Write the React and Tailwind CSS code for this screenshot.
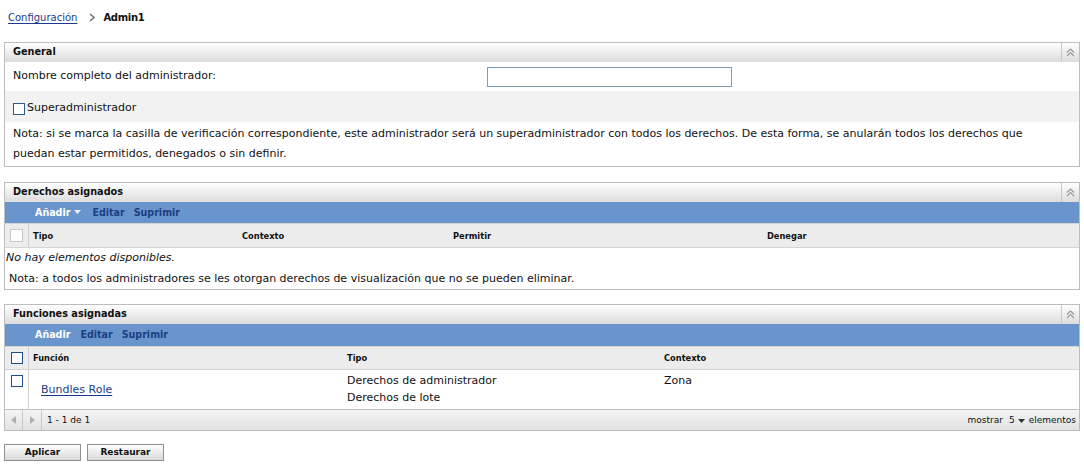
import React from "react";

const F = { fontFamily: '"DejaVu Sans", Verdana, sans-serif' };
const FC = { fontFamily: '"DejaVu Sans Condensed", "DejaVu Sans", sans-serif' };

function Collapse() {
  return (
    <div className="w-[18px] self-stretch border-l border-[#c8c8c8] flex items-center justify-center">
      <svg width="9" height="9" viewBox="0 0 9 9" fill="none" stroke="#9a9a9a" strokeWidth="1.2">
        <path d="M1 4.5 L4.5 1 L8 4.5" />
        <path d="M1 8 L4.5 4.5 L8 8" />
      </svg>
    </div>
  );
}

function PanelHeader({ title }) {
  return (
    <div className="h-[19px] flex items-stretch bg-gradient-to-b from-white to-[#dcdcdc]">
      <div className="flex-1 pl-[8px] flex items-center text-[10.8px] font-bold text-[#111]" style={FC}>{title}</div>
      <Collapse />
    </div>
  );
}

function Toolbar({ arrow, h }) {
  return (
    <div className={`${h} bg-[#6a95cc] flex items-center pl-[30px] text-[10.6px] font-bold`} style={FC}>
      <span className="text-white flex items-center gap-[4px]">
        Añadir
        {arrow && (
          <svg width="7" height="4" viewBox="0 0 7 4"><path d="M0 0 H7 L3.5 4Z" fill="#e8eef8" /></svg>
        )}
      </span>
      <span className={`text-[#1c3f86] ${arrow ? "ml-[11px]" : "ml-[10px]"}`}>Editar</span>
      <span className="text-[#1c3f86] ml-[9px]">Suprimir</span>
    </div>
  );
}

function Box() {
  return <div className="w-[12px] h-[12px] bg-white border border-[#1f4f8a]" />;
}

const btn =
  "w-[77px] h-[17px] border border-[#8e8e8e] bg-gradient-to-b from-white to-[#d8d8d8] font-bold text-[9px] flex items-center justify-center text-[#111]";

export default function App() {
  return (
    <div className="w-[1084px] h-[475px] bg-white text-[11px] text-[#111] px-[4px]" style={F}>
      <div className="h-[42px] pt-[10px] pl-[4px] flex items-start">
        <span className="text-[#1a3c8c] underline underline-offset-2 text-[10px]">Configuración</span>
        <svg width="6" height="9" viewBox="0 0 6 9" className="mt-[3px] ml-[12px]"><path d="M1 1 L5 4.5 L1 8" fill="none" stroke="#777" strokeWidth="1.6" /></svg>
        <span className="font-bold text-[10px] tracking-[-0.3px] ml-[8px]">Admin1</span>
      </div>

      {/* General */}
      <div className="border border-[#bdbdbd]">
        <PanelHeader title="General" />
        <div className="h-[29px] flex items-center pl-[8px]">
          <span className="w-[474px]">Nombre completo del administrador:</span>
          <div className="w-[245px] h-[20px] border border-[#7f9db9] bg-white" />
        </div>
        <div className="h-[31px] flex items-center pt-[4px] pl-[8px] bg-[#f2f2f2] gap-[2px]">
          <div className="w-[12px] h-[12px] border border-[#2a5a8a] bg-white" />
          <span>Superadministrador</span>
        </div>
        <div className="pl-[8px] pr-[40px] pt-[2px] pb-[2px] leading-[20px]">
          Nota: si se marca la casilla de verificación correspondiente, este administrador será un superadministrador con todos los derechos. De esta forma, se anularán todos los derechos que puedan estar permitidos, denegados o sin definir.
        </div>
      </div>

      {/* Derechos asignados */}
      <div className="border border-[#bdbdbd] mt-[15px]">
        <PanelHeader title="Derechos asignados" />
        <Toolbar arrow h="h-[21px]" />
        <div className="h-[25px] bg-[#ececec] border-t border-[#d4d4d4] border-b border-[#c0c0c0] flex items-stretch font-bold text-[9.2px]" style={FC}>
          <div className="w-[24px] border-r border-[#d0d0d0] flex items-center justify-center">
            <div className="w-[13px] h-[13px] bg-white border border-[#c8c8c8]" />
          </div>
          <div className="w-[213px] pl-[4px] flex items-center">Tipo</div>
          <div className="w-[211px] flex items-center">Contexto</div>
          <div className="w-[314px] flex items-center">Permitir</div>
          <div className="flex-1 flex items-center">Denegar</div>
        </div>
        <div className="h-[21px] flex items-center italic pl-[1px]">No hay elementos disponibles.</div>
        <div className="h-[20px] flex items-center pl-[4px]">Nota: a todos los administradores se les otorgan derechos de visualización que no se pueden eliminar.</div>
      </div>

      {/* Funciones asignadas */}
      <div className="border border-[#bdbdbd] mt-[14px]">
        <PanelHeader title="Funciones asignadas" />
        <Toolbar h="h-[22px]" />
        <div className="h-[24px] bg-[#ececec] border-t border-[#d4d4d4] border-b border-[#c0c0c0] flex items-stretch font-bold text-[9.2px]" style={FC}>
          <div className="w-[24px] border-r border-[#d0d0d0] flex items-center justify-center">
            <Box />
          </div>
          <div className="w-[318px] pl-[4px] flex items-center">Función</div>
          <div className="w-[317px] flex items-center">Tipo</div>
          <div className="flex-1 flex items-center">Contexto</div>
        </div>
        <div className="h-[39px] flex items-stretch">
          <div className="w-[24px] border-r border-[#d0d0d0] flex justify-center pt-[5px]">
            <Box />
          </div>
          <div className="w-[318px] pl-[12px] flex items-center pt-[1px]">
            <span className="text-[#1a3c8c] underline underline-offset-2">Bundles Role</span>
          </div>
          <div className="w-[317px] pt-[2px] leading-[17px]">
            <div>Derechos de administrador</div>
            <div>Derechos de lote</div>
          </div>
          <div className="flex-1 pt-[2px] leading-[17px]">Zona</div>
        </div>
        <div className="h-[21px] bg-gradient-to-b from-[#f4f4f4] to-[#e2e2e2] border-t border-[#c0c0c0] flex items-stretch text-[9px]">
          <div className="w-[18px] border-r border-[#c8c8c8] flex items-center justify-center">
            <svg width="5" height="8" viewBox="0 0 5 8"><path d="M5 0 V8 L0 4Z" fill="#b0b0b0" /></svg>
          </div>
          <div className="w-[19px] border-r border-[#c8c8c8] flex items-center justify-center">
            <svg width="5" height="8" viewBox="0 0 5 8"><path d="M0 0 V8 L5 4Z" fill="#b0b0b0" /></svg>
          </div>
          <div className="flex-1 pl-[5px] flex items-center pt-[2px]">1 - 1 de 1</div>
          <div className="flex items-center pr-[3px] gap-[4px] pt-[2px]">
            <span>mostrar</span>
            <span className="flex items-center gap-[3px] ml-[2px]">5
              <svg width="7" height="4" viewBox="0 0 7 4"><path d="M0 0 H7 L3.5 4Z" fill="#333" /></svg>
            </span>
            <span>elementos</span>
          </div>
        </div>
      </div>

      <div className="mt-[13px] flex gap-[6px]">
        <button className={btn} style={F}>Aplicar</button>
        <button className={btn} style={F}>Restaurar</button>
      </div>
    </div>
  );
}
